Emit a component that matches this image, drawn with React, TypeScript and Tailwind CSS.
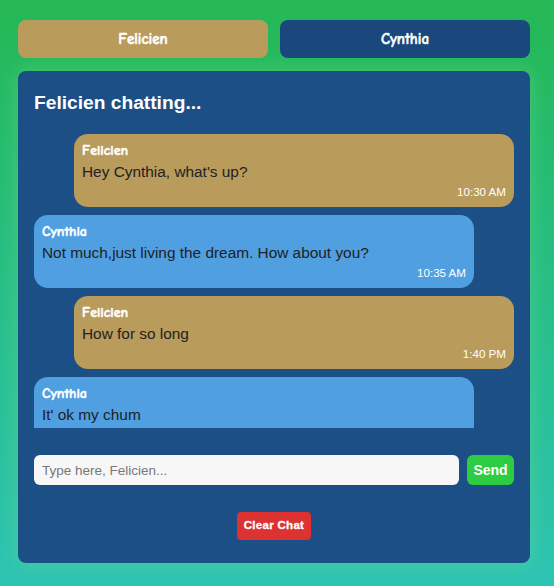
const messages = [
  { from: "Felicien", text: "Hey Cynthia, what's up?", time: "10:30 AM" },
  { from: "Cynthia", text: "Not much,just living the dream. How about you?", time: "10:35 AM" },
  { from: "Felicien", text: "How for so long", time: "1:40 PM" },
  { from: "Cynthia", text: "It' ok my chum", time: "1:42 PM" },
];

const comic = { fontFamily: '"Comic Sans MS", "Comic Neue", "Chalkboard SE", cursive, sans-serif' };

export default function App() {
  return (
    <main
      className="min-h-[586px] bg-gradient-to-b from-[#25b853] to-[#2ec4b4] px-[18px] pt-5 pb-[23px]"
      style={{ fontFamily: '"Liberation Sans", Arial, sans-serif' }}
    >
      <div className="w-[512px]">
        <div className="flex gap-3">
          <button
            className="h-[38px] flex-1 rounded-lg bg-[#b99b5c] text-[15px] font-bold text-white [-webkit-text-stroke:0.5px_white]"
            style={comic}
          >
            Felicien
          </button>
          <button
            className="h-[38px] flex-1 rounded-lg bg-[#1a487c] text-[15px] font-bold text-white [-webkit-text-stroke:0.5px_white]"
            style={comic}
          >
            Cynthia
          </button>
        </div>

        <section className="mt-[13px] flex h-[492px] flex-col rounded-lg bg-[#1b4f86] px-4 pt-[18px] pb-[23px] shadow-[0_0_20px_rgba(120,220,140,0.45)]">
          <h2 className="text-[19.2px] font-bold leading-7 text-white">Felicien chatting...</h2>

          <div className="mt-[17px] flex h-[294px] flex-col gap-2 overflow-hidden">
            {messages.map((m, i) => {
              const mine = m.from === "Felicien";
              return (
                <div
                  key={i}
                  className={`w-[440px] shrink-0 rounded-[14px] px-2 pt-2 pb-[7px] ${
                    mine ? "self-end bg-[#b99b5c]" : "self-start bg-[#4f9fe1]"
                  }`}
                >
                  <div
                    className="text-[14px] font-bold leading-[18px] text-white [-webkit-text-stroke:0.5px_white]"
                    style={comic}
                  >
                    {m.from}
                  </div>
                  <div className="mt-[1px] text-[15.4px] leading-[22px] text-[#222]">{m.text}</div>
                  <div className="mt-[1px] text-right text-[11.6px] leading-4 text-white">{m.time}</div>
                </div>
              );
            })}
          </div>

          <div className="mt-[27px] flex gap-2">
            <input
              className="h-[30px] flex-1 rounded-md bg-[#f7f7f7] px-2 text-[13.5px] text-[#333] outline-none placeholder:text-[#777]"
              placeholder="Type here, Felicien..."
            />
            <button className="h-[30px] w-[47px] rounded-md bg-[#2ecc40] text-[14px] font-bold text-white">
              Send
            </button>
          </div>

          <div className="mt-[27px] flex justify-center">
            <button className="h-7 w-[74px] rounded bg-[#dc3232] text-[11.5px] font-black tracking-[0.3px] text-white [-webkit-text-stroke:0.3px_white]">
              Clear Chat
            </button>
          </div>
        </section>
      </div>
    </main>
  );
}
